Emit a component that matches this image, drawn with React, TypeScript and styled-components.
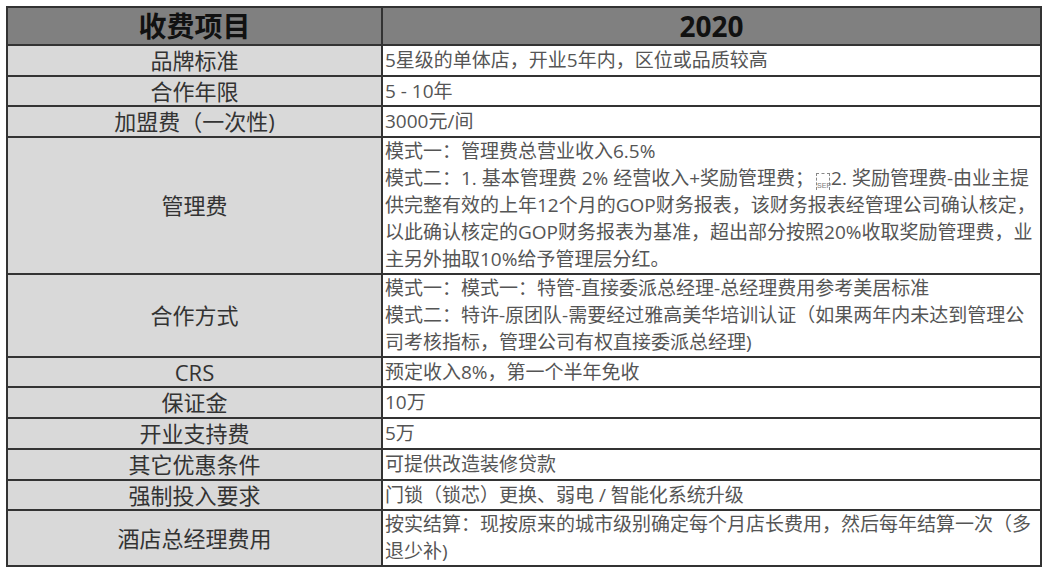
import React from 'react';
import styled, {createGlobalStyle} from 'styled-components';

const GlobalStyle = createGlobalStyle`
  html, body {
    margin: 0;
    padding: 0;
    background: #fff;
  }
  body {
    font-family: "Open Sans", "Noto Sans CJK SC", sans-serif;
  }
`;

const Page = styled.div`
  padding: 6px 0 0 6px;
`;

const Table = styled.table`
  width: 1034px;
  border-collapse: collapse;
  table-layout: fixed;
  td, th {
    border: 2px solid #333;
    padding: 0;
  }
`;

const HeadCell = styled.th`
  height: 36px;
  background: #808080;
  color: #111;
  font-size: 28px;
  font-weight: 700;
  line-height: 35px;
  text-align: center;
`;

const NameCell = styled.td`
  background: #d9d9d9;
  color: #333;
  font-size: 22px;
  text-align: center;
  vertical-align: middle;
  line-height: 27px;
`;

const ValueCell = styled.td<{$h: number}>`
  height: ${p => p.$h}px;
  background: #fff;
  color: #555;
  font-size: 19px;
  line-height: 27px;
  padding-left: 2px !important;
  vertical-align: middle;
  white-space: nowrap;
  overflow: hidden;
`;

const Line = styled.div`
  height: 27px;
`;

const Sep = styled.span`
  display: inline-block;
  width: 14px;
  height: 17px;
  margin: 0 1px 0 2px;
  padding-top: 7px;
  border: 1px dashed #888;
  border-bottom: none;
  font-size: 7px;
  font-family: "Liberation Sans", sans-serif;
  line-height: 9px;
  color: #777;
  text-align: center;
  vertical-align: -3px;
  box-sizing: border-box;
`;

type Row = {name: string, h: number, lines: React.ReactNode[]};

const rows: Row[] = [
  {name: '品牌标准', h: 29, lines: ['5星级的单体店，开业5年内，区位或品质较高']},
  {name: '合作年限', h: 28, lines: ['5 - 10年']},
  {name: '加盟费（一次性)', h: 29, lines: ['3000元/间']},
  {
    name: '管理费', h: 131, lines: [
      '模式一：管理费总营业收入6.5%',
      <>模式二：1. 基本管理费 2% 经营收入+奖励管理费；<Sep>SEP</Sep>2. 奖励管理费-由业主提</>,
      '供完整有效的上年12个月的GOP财务报表，该财务报表经管理公司确认核定，',
      '以此确认核定的GOP财务报表为基准，超出部分按照20%收取奖励管理费，业',
      '主另外抽取10%给予管理层分红。',
    ],
  },
  {
    name: '合作方式', h: 77, lines: [
      '模式一：模式一：特管-直接委派总经理-总经理费用参考美居标准',
      '模式二：特许-原团队-需要经过雅高美华培训认证（如果两年内未达到管理公',
      '司考核指标，管理公司有权直接委派总经理)',
    ],
  },
  {name: 'CRS', h: 28, lines: ['预定收入8%，第一个半年免收']},
  {name: '保证金', h: 29, lines: ['10万']},
  {name: '开业支持费', h: 29, lines: ['5万']},
  {name: '其它优惠条件', h: 29, lines: ['可提供改造装修贷款']},
  {name: '强制投入要求', h: 28, lines: ['门锁（锁芯）更换、弱电 / 智能化系统升级']},
  {
    name: '酒店总经理费用', h: 52, lines: [
      '按实结算：现按原来的城市级别确定每个月店长费用，然后每年结算一次（多',
      '退少补)',
    ],
  },
];

export default function App() {
  return (
    <Page>
      <GlobalStyle/>
      <Table>
        <colgroup>
          <col style={{width: 375}}/>
          <col style={{width: 659}}/>
        </colgroup>
        <thead>
          <tr>
            <HeadCell>收费项目</HeadCell>
            <HeadCell>2020</HeadCell>
          </tr>
        </thead>
        <tbody>
          {rows.map(r => (
            <tr key={r.name}>
              <NameCell>{r.name}</NameCell>
              <ValueCell $h={r.h}>
                {r.lines.map((l, i) => <Line key={i}>{l}</Line>)}
              </ValueCell>
            </tr>
          ))}
        </tbody>
      </Table>
    </Page>
  );
}
